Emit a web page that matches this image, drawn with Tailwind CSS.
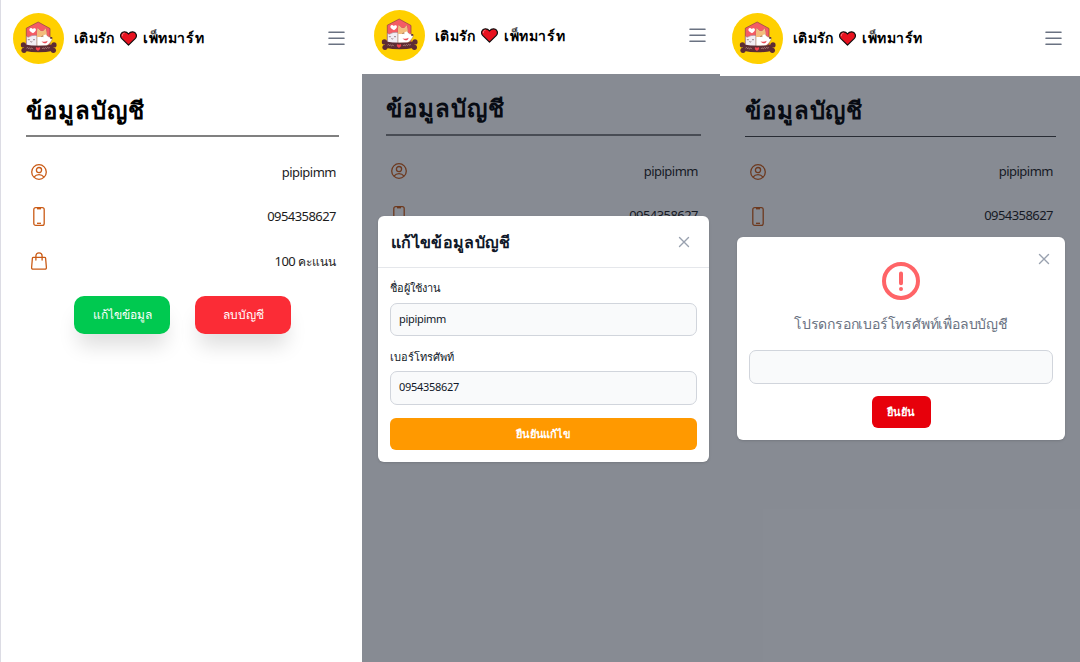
<!DOCTYPE html>
<html lang="th">
<head>
<meta charset="utf-8">
<title>ข้อมูลบัญชี</title>
<script src="https://cdn.jsdelivr.net/npm/@tailwindcss/browser@4"></script>
</head>
<body class="w-[1080px] h-[662px] overflow-hidden bg-white font-['Noto_Sans','DejaVu_Sans',sans-serif] text-black">
<svg class="hidden">
  <symbol id="logo" viewBox="0 0 51 51">
    <circle cx="25.5" cy="25.5" r="25.5" fill="#ffd000"/>
    <path d="M13.300 32V15.200L25.200 9l11.800 6.500V32z" fill="#f45c64" stroke="#8a4048" stroke-width=".7" stroke-linejoin="round"/>
    <path d="M20 20.300c-3.300-2-4-3.200-3.500-4.400.6-1.300 2.500-1.200 3.200.1.900-1.400 3.100-1 3.200.5.100 1.200-.8 2.300-2.900 3.800z" fill="#fff"/>
    <path d="M13.500 33v-9.800l1.600 1.100q3.900-2.600 8.900-1.800V33z" fill="#f1edf3" stroke="#9a7c88" stroke-width=".5"/>
    <path d="M24 33V21.500l.6-6.300 3.200 3h2.400l2.600-2.700.9 6.300c.5 1.600 2.200 2.300 4.400 2.600 1.400.2 1.300 1.900.4 3.300-1 1.900-2.800 3.700-5 5.300z" fill="#fff" stroke="#a5704c" stroke-width=".5"/>
    <path d="M24 24v-2.500l.6-6.300 3.200 3h2.400l2.600-2.700.9 6.300c-2-.6-3.200.3-4 2.200z" fill="#f3bd7c"/>
    <ellipse cx="38.200" cy="24.900" rx="1.200" ry=".9" fill="#54292f"/>
    <path d="M28.600 28.300c2 .9 4.200.7 6-.6-.4 2.800-3.700 4-6 .6z" fill="#e84b59"/>
    <path d="M28.400 23.600q1-1 2 0M14.800 26.700h2M20 26.700h2M17.300 28.500q1 1 2 0" stroke="#604047" stroke-width=".6" fill="none"/>
    <g fill="#5d2c34"><circle cx="10.400" cy="31.900" r="2.600"/><circle cx="11" cy="37.300" r="2.600"/><circle cx="41" cy="31.900" r="2.600"/><circle cx="40.400" cy="37.300" r="2.600"/><path d="M11 31.200q14.500 3.200 29.500 0v6.500q-15 3.200-29.500 0z"/></g>
    <path d="M13.500 35.200l1-.8 1 1.300 1-1 1 1.400 1.300-1.200 1 1.300M29 36l1-1.200 1.300 1 1-1.200 1.300.9 1-1.100 1.300.8 1-.8" fill="none" stroke="#c9a49c" stroke-width=".6"/>
    <path d="M25 38c-2-1.500-2.200-2-2.200-2.800 0-1.200 1.800-1.300 2.200-.3.500-1 2.200-.9 2.200.3 0 .8-.4 1.300-2.200 2.800z" fill="#f5424d"/>
  </symbol>
  <symbol id="heart" viewBox="0 0 17 15">
    <path d="M8.500 14.200L1.600 7.300C-.5 4.800.9 1 4.200.8 6 .7 7.500 1.600 8.500 3 9.500 1.600 11 .7 12.800.8c3.300.2 4.700 4 2.600 6.500z" fill="#e8121f" stroke="#111" stroke-width="1.200" stroke-linejoin="round"/>
    <path d="M2.300 5.200C2.200 3.500 3 2.300 4.500 2.100" fill="none" stroke="#f4878b" stroke-width=".9"/>
  </symbol>
  <symbol id="menu" viewBox="0 0 17 15"><path d="M1 1.200h15M1 7.200h15M1 13.200h15" stroke="#6a7282" stroke-width="1.600" stroke-linecap="round"/></symbol>
  <symbol id="user" viewBox="0 0 16 16"><g fill="none" stroke="#ca5b16" stroke-width="1.300"><circle cx="8" cy="8" r="7.300"/><circle cx="8" cy="6.100" r="2.600"/><path d="M3 13.200c1.300-1.700 3-2.500 5-2.500s3.700.8 5 2.500"/></g></symbol>
  <symbol id="phone" viewBox="0 0 12 19"><g fill="none" stroke="#ca5b16" stroke-width="1.300"><rect x=".8" y=".7" width="10.400" height="17.600" rx="1.900"/><path d="M4 1.600h4" stroke-width="1.600"/><path d="M4 16.300h4"/></g></symbol>
  <symbol id="bag" viewBox="0 0 16 18"><g fill="none" stroke="#ca5b16" stroke-width="1.300" stroke-linejoin="round" stroke-linecap="round"><path d="M2.400 5.300h11.200c.6 0 .9.300 1 .9l.8 9.300c.1 1.100-.5 1.700-1.500 1.700H2.100c-1 0-1.600-.6-1.500-1.700l.8-9.300c.1-.6.400-.9 1-.9z"/><path d="M4.900 8V4.200C4.900 2.200 6.200.9 8 .9s3.100 1.300 3.100 3.300V8"/></g></symbol>
  <symbol id="close" viewBox="0 0 12 12"><path d="M1.500 1.500l9 9m0-9l-9 9" stroke="#99a1af" stroke-width="1.400" stroke-linecap="round"/></symbol>
</svg>
<div class="flex h-full">
  <section class="w-[362px] shrink-0 border-l border-[#dcdce4]">
    <header class="h-[76px] flex items-center pl-[12px] pr-[17px]">
      <svg class="size-[51px] shrink-0"><use href="#logo"/></svg>
      <div class="ml-[10px] flex items-center text-[14px] leading-5 font-bold whitespace-nowrap"><span class="w-[41px] tracking-[0.3px]">เติมรัก</span><svg class="w-[17px] h-[15px] ml-[5px] mr-[6px]"><use href="#heart"/></svg><span class="tracking-[0.6px]">เพ็ทมาร์ท</span></div>
      <svg class="w-[17px] h-[15px] ml-auto"><use href="#menu"/></svg>
    </header>
    <main class="pl-[25px] pr-[23px]">
      <h1 class="h-[61px] pt-[17px] text-[24px] leading-[34px] tracking-[0.95px] font-bold border-b-2 border-[#808080] whitespace-nowrap">ข้อมูลบัญชี</h1>
      <ul class="pt-[13px] pl-[5px] pr-[3px] text-[13px] text-[#1c1c1c]">
        <li class="h-[44.500px] flex items-center justify-between"><svg class="size-4"><use href="#user"/></svg><span class="tracking-[-0.5px]">pipipimm</span></li>
        <li class="h-[44.500px] flex items-center justify-between"><svg class="w-3 h-[19px] ml-[2px]"><use href="#phone"/></svg><span class="tracking-[-0.55px]">0954358627</span></li>
        <li class="h-[44.500px] flex items-center justify-between"><svg class="w-4 h-[18px]"><use href="#bag"/></svg><span><span class="tracking-[-0.55px]">100 </span><span class="text-[12px] font-medium">คะแนน</span></span></li>
      </ul>
      <div class="mt-3 flex justify-center gap-[25px] text-[12px] font-medium text-white">
        <button class="w-[96px] h-[38px] rounded-[10px] bg-[#00c950] shadow-[0_16px_20px_-4px_rgba(0,0,0,0.13)]">แก้ไขข้อมูล</button>
        <button class="w-[96px] h-[38px] rounded-[10px] bg-[#fb2c36] shadow-[0_16px_20px_-4px_rgba(0,0,0,0.13)]">ลบบัญชี</button>
      </div>
    </main>
  </section>

  <section class="relative w-[358px] shrink-0">
    <header class="h-[74px] flex items-center pl-[12px] pr-[14px] pb-[3px]">
      <svg class="size-[51px] shrink-0"><use href="#logo"/></svg>
      <div class="ml-[10px] flex items-center text-[14px] leading-5 font-bold whitespace-nowrap"><span class="w-[41px] tracking-[0.3px]">เติมรัก</span><svg class="w-[17px] h-[15px] ml-[5px] mr-[6px]"><use href="#heart"/></svg><span class="tracking-[0.6px]">เพ็ทมาร์ท</span></div>
      <svg class="w-[17px] h-[15px] ml-auto"><use href="#menu"/></svg>
    </header>
    <main class="pl-[24px] pr-[19px]">
      <h1 class="h-[62px] pt-[17px] text-[24px] leading-[34px] tracking-[0.95px] font-bold border-b-2 border-[#808080] whitespace-nowrap">ข้อมูลบัญชี</h1>
      <ul class="pt-[13px] pl-[5px] pr-[3px] text-[13px] text-[#1c1c1c]">
        <li class="h-[44.500px] flex items-center justify-between"><svg class="size-4"><use href="#user"/></svg><span class="tracking-[-0.5px]">pipipimm</span></li>
        <li class="h-[44.500px] flex items-center justify-between"><svg class="w-3 h-[19px] ml-[2px]"><use href="#phone"/></svg><span class="tracking-[-0.55px]">0954358627</span></li>
      </ul>
    </main>
    <div class="absolute inset-x-0 bottom-0 top-[74px] bg-[#101828]/50"></div>
    <div class="absolute left-[16px] top-[216px] w-[331px] h-[246px] rounded-[6px] bg-white shadow-sm">
      <div class="h-[52px] flex items-center justify-between pl-[13px] pr-[19px] border-b border-gray-200">
        <h2 class="text-[16px] tracking-[0.35px] font-bold text-[#101828] whitespace-nowrap">แก้ไขข้อมูลบัญชี</h2>
        <svg class="size-3"><use href="#close"/></svg>
      </div>
      <form class="pt-[11px] pl-[12px] pr-[12px] text-[11px] text-[#101828]">
        <label class="block h-[24px] leading-[18px] font-medium">ชื่อผู้ใช้งาน</label>
        <div class="h-[33px] rounded-[7px] border border-gray-300 bg-gray-50 px-2 flex items-center tracking-[-0.3px]"><span>pipipimm</span></div>
        <label class="block mt-[12px] h-[23px] leading-[18px] font-medium">เบอร์โทรศัพท์</label>
        <div class="h-[34px] rounded-[7px] border border-gray-300 bg-gray-50 px-2 pb-px flex items-center tracking-[-0.3px]"><span>0954358627</span></div>
        <button class="mt-[13px] block w-full h-[32px] rounded-[6px] bg-[#ff9900] text-white font-semibold tracking-[-0.2px]">ยืนยันแก้ไข</button>
      </form>
    </div>
  </section>

  <section class="relative w-[360px] shrink-0">
    <header class="h-[76px] flex items-center pl-[12px] pr-[18px]">
      <svg class="size-[51px] shrink-0"><use href="#logo"/></svg>
      <div class="ml-[10px] flex items-center text-[14px] leading-5 font-bold whitespace-nowrap"><span class="w-[41px] tracking-[0.3px]">เติมรัก</span><svg class="w-[17px] h-[15px] ml-[5px] mr-[6px]"><use href="#heart"/></svg><span class="tracking-[0.5px]">เพ็ทมาร์ท</span></div>
      <svg class="w-[17px] h-[15px] ml-auto"><use href="#menu"/></svg>
    </header>
    <main class="pl-[25px] pr-[24px]">
      <h1 class="h-[61px] pt-[17px] text-[24px] leading-[34px] tracking-[0.9px] font-bold border-b border-[#404040] whitespace-nowrap">ข้อมูลบัญชี</h1>
      <ul class="pt-[13px] pl-[5px] pr-[3px] text-[13px] text-[#1c1c1c]">
        <li class="h-[44px] flex items-center justify-between"><svg class="size-4"><use href="#user"/></svg><span class="tracking-[-0.5px]">pipipimm</span></li>
        <li class="h-[44px] flex items-center justify-between"><svg class="w-3 h-[19px] ml-[2px]"><use href="#phone"/></svg><span class="tracking-[-0.55px]">0954358627</span></li>
      </ul>
    </main>
    <div class="absolute inset-x-0 bottom-0 top-[76px] bg-[#101828]/50"></div>
    <div class="absolute left-[17px] top-[237px] w-[328px] h-[203px] rounded-[6px] bg-white shadow-sm flex flex-col items-center px-[12px]">
      <svg class="absolute size-3 right-[15px] top-[16px]"><use href="#close"/></svg>
      <svg class="mt-[25px] size-[38px] shrink-0" viewBox="0 0 38 38" fill="none" stroke="#ff6467" stroke-width="4" stroke-linecap="round"><circle cx="19" cy="19" r="17"/><path d="M19 11.500v9.700M19 27v.1"/></svg>
      <p class="mt-[13px] h-[22px] leading-[22px] text-[14px] tracking-[-0.2px] text-[#6a7282] whitespace-nowrap">โปรดกรอกเบอร์โทรศัพท์เพื่อลบบัญชี</p>
      <div class="mt-[15px] w-full h-[34px] shrink-0 rounded-[7px] border border-gray-300 bg-gray-50"></div>
      <button class="mt-[12px] w-[59px] h-[32px] shrink-0 rounded-[6px] bg-[#e7000b] text-white text-[11px] font-semibold">ยืนยัน</button>
    </div>
  </section>
</div>
</body>
</html>
